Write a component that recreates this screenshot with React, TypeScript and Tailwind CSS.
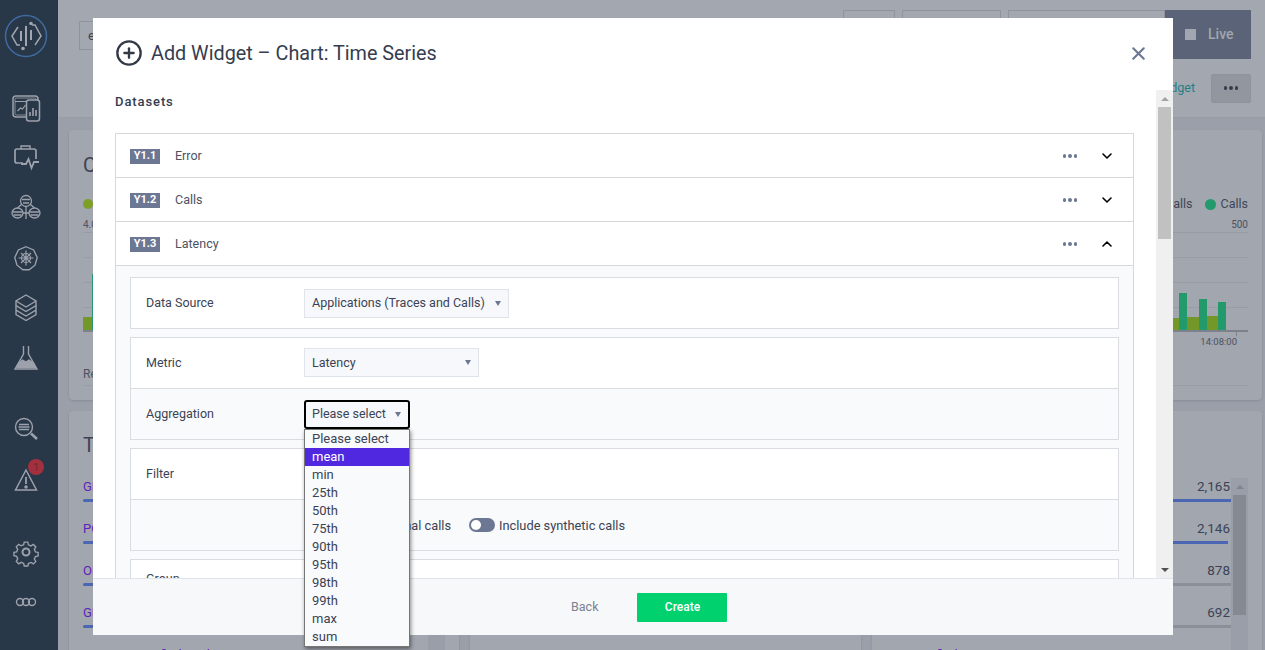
import type { ReactNode } from "react";
import { ChevronDown, ChevronUp, CirclePlus, X } from "lucide-react";

const font = { fontFamily: '"Roboto", "Liberation Sans", sans-serif' };

const options = ["Please select", "mean", "min", "25th", "50th", "75th", "90th", "95th", "98th", "99th", "max", "sum"];

const leftRows = [
  { label: "GET /api/snapshots", color: "bg-[#4b67b3]" },
  { label: "POST /api/events", color: "bg-[#4b67b3]" },
  { label: "OPTIONS /api/events", color: "bg-[#4b67b3]" },
  { label: "GET /api/calls", color: "bg-[#4b67b3]" },
  { label: "www.unspecified.application", color: "bg-[#4b67b3]" },
];

const rightRows = [
  { label: "GET /api", value: "2,165", bar: "w-full", color: "bg-[#4b67b3]" },
  { label: "POST /api", value: "2,146", bar: "w-[99%]", color: "bg-[#4b67b3]" },
  { label: "GET /calls", value: "878", bar: "w-full", color: "bg-[#8b8f9a]" },
  { label: "GET /events", value: "692", bar: "w-full", color: "bg-[#8b8f9a]" },
  { label: "/unspecified/", value: "", bar: "w-full", color: "bg-[#8b8f9a]" },
];

function LogoIcon() {
  return (
    <svg width="44" height="44" viewBox="0 0 44 44" fill="none">
      <circle cx="22" cy="22" r="20.5" stroke="#3f6b9f" strokeWidth="1.5" />
      <path d="M14 13 8 22l5 9h3M28 11h3l6 11-6 9" stroke="#a2a6b0" strokeWidth="1.5" />
      <path d="M17 17v10M22 12v20M27 16v10" stroke="#a2a6b0" strokeWidth="2" />
      <circle cx="27" cy="9.500" r="1.800" fill="#a2a6b0" />
      <circle cx="19" cy="34.500" r="1.800" fill="#a2a6b0" />
    </svg>
  );
}

function NavIcon({ name }: { name: string }) {
  const s = { stroke: "#9da1ac", strokeWidth: 1.2, fill: "none" };
  return (
    <svg width="30" height="30" viewBox="0 0 30 30">
      {name === "dash" && (
        <g {...s}>
          <rect x="2" y="3" width="25" height="21" rx="3" strokeWidth="1.500" />
          <rect x="4" y="5" width="21" height="17" rx="1.500" strokeWidth=".8" />
          <path d="M4 8.500h15M6.500 18l3-3 2 1 3-4" />
          <rect x="15.500" y="7" width="13" height="21" rx="2.500" fill="#283848" strokeWidth="1.500" />
          <path d="M19 23v-4M22 23v-8M25 23v-6" strokeWidth="1.600" />
        </g>
      )}
      {name === "case" && (
        <g {...s}>
          <path d="M10 6V3h9v3" strokeWidth="1.400" />
          <path d="M12 20H6a2 2 0 0 1-2-2V8a2 2 0 0 1 2-2h17a2 2 0 0 1 2 2v8" strokeWidth="1.700" />
          <path d="M10 21h5l2.500-5 3 9 2.500-6h5" strokeWidth="1.800" />
        </g>
      )}
      {name === "nodes" && (
        <g {...s} strokeWidth="1.300">
          <circle cx="15" cy="8" r="5.500" />
          <path d="M11 6.500h8M12 10h6" />
          <ellipse cx="6.500" cy="20" rx="5.500" ry="5" />
          <ellipse cx="23.500" cy="20" rx="5.500" ry="5" />
          <path d="M2 19h9M19 19h9M2.500 22h8M19.500 22h8M11 11 6.500 15M19 11l4.500 4M12 20h6M15 14v12" />
        </g>
      )}
      {name === "kube" && (
        <g {...s}>
          <path d="m15 2.500 8.500 3.500 4 8.500-2.500 8.500-6.500 5h-7L5 23l-2.500-8.500 4-8.500z" strokeWidth="1.500" transform="translate(1.500 1.500) scale(.9)" />
          <circle cx="15" cy="15" r="4.500" />
          <path d="M15 7.500v15M7.500 15h15M10 10l10 10M20 10 10 20" />
        </g>
      )}
      {name === "layers" && (
        <g {...s} strokeWidth="1.400">
          <path d="m15 2 10 6v4.500l-10 6-10-6V8z" />
          <path d="m5 8 10 6 10-6M5 12.500v4.500l10 6 10-6v-4.500M5 17v4.500l10 6 10-6V17" />
        </g>
      )}
      {name === "flask" && (
        <g {...s} strokeWidth="1.400">
          <path d="M12.500 3v8L4 26h22l-8.500-15V3" />
          <path d="m8 20 3.500-3 3.500 2 3-2 4.500 3 2 4.500H6z" fill="#9da1ac" />
        </g>
      )}
      {name === "search" && (
        <g {...s} strokeWidth="1.400">
          <circle cx="13" cy="13" r="8.500" />
          <path d="M8 10.500h10M7.500 13h11M8 15.500h10" strokeWidth="1.700" />
          <path d="m20 19.500 6 5.500" strokeWidth="2.600" />
        </g>
      )}
      {name === "warn" && (
        <g {...s} strokeWidth="1.500">
          <path d="M15 5 4.500 25h21z" />
          <path d="M15 12v7" strokeWidth="1.800" />
          <circle cx="15" cy="22" r="1" fill="#9da1ac" />
        </g>
      )}
      {name === "gear" && (
        <g {...s} strokeWidth="1.500">
          <path d="m13 4 4 0 .7 3 2.800 1.200 2.700-1.600 2.700 2.800-1.600 2.700 1.200 2.800 3 .6v3.800l-3 .7-1.200 2.800 1.600 2.700-2.700 2.700-2.700-1.600-2.800 1.200-.7 2.700h-4l-.6-2.800-2.800-1.200-2.700 1.600-2.700-2.700 1.600-2.700-1.200-2.800-3-.7v-3.800l3-.6 1.200-2.800-1.600-2.700 2.700-2.800 2.700 1.600 2.800-1.200z" transform="translate(1.500 1.500) scale(.9)" />
          <circle cx="15" cy="15" r="3.500" strokeWidth="2" />
        </g>
      )}
      {name === "more" && (
        <g {...s} strokeWidth="1.400">
          <circle cx="9" cy="15" r="3.500" />
          <circle cx="15" cy="15" r="3.500" />
          <circle cx="21" cy="15" r="3.500" />
        </g>
      )}
    </svg>
  );
}

function NavItem({ name, badge }: { name: string; badge?: boolean }) {
  return (
    <div className="relative flex h-[50px] items-center justify-center pr-[7px]">
      <NavIcon name={name} />
      {badge && (
        <span className="absolute left-[28px] top-[4px] flex h-4 w-4 items-center justify-center rounded-full bg-[#a3303d] text-[10px] text-[#78242f]">
          1
        </span>
      )}
    </div>
  );
}

function Sidebar() {
  return (
    <aside className="flex h-full w-[58px] shrink-0 flex-col bg-[#283848]">
      <div className="flex h-[83px] items-start justify-center pr-[7px] pt-[14px]">
        <LogoIcon />
      </div>
      <NavItem name="dash" />
      <NavItem name="case" />
      <NavItem name="nodes" />
      <NavItem name="kube" />
      <NavItem name="layers" />
      <NavItem name="flask" />
      <div className="mt-[21px]">
        <NavItem name="search" />
      </div>
      <div className="mt-[1px]">
        <NavItem name="warn" badge />
      </div>
      <div className="mt-[22px]">
        <NavItem name="gear" />
      </div>
      <NavItem name="more" />
    </aside>
  );
}

function Dots({ color = "bg-[#6c7793]", size = "h-[3.5px] w-[3.5px]" }: { color?: string; size?: string }) {
  return (
    <span className="flex items-center gap-[2px]">
      <span className={`${size} rounded-full ${color}`} />
      <span className={`${size} rounded-full ${color}`} />
      <span className={`${size} rounded-full ${color}`} />
    </span>
  );
}

function PageHeader() {
  return (
    <div className="h-[118px] shrink-0 border-b border-[#989ca6] bg-[#a3a7b0] shadow-sm">
      <div className="flex h-[59px] items-start pl-[21px] pr-[14px] pt-[10px]">
        <div className="mt-[11px] flex h-[29px] w-[120px] items-center border border-[#8f939d] pl-2 text-[13px] text-[#3e4656]">e</div>
        <div className="ml-auto flex h-[49px] items-start gap-[7px]">
          <div className="h-[30px] w-[52px] border border-[#8f939d]" />
          <div className="h-[30px] w-[99px] border border-[#8f939d]" />
          <div className="h-[30px] w-[157px] border border-[#8f939d]" />
          <div className="-ml-[7px] flex h-[49px] w-[86px] items-center gap-[12px] bg-[#5a6377] pl-[20px] text-[14px] font-medium text-[#a2a6b0]">
            <span className="h-[11px] w-[11px] bg-[#a2a6b0]" />
            Live
          </div>
        </div>
      </div>
      <div className="flex h-[58px] items-center justify-end pr-[14px]">
        <span className="mr-[16px] text-[12.5px] text-[#1f7f86]">Add Widget</span>
        <div className="flex h-[29px] w-[40px] items-center justify-center rounded-[2px] border border-[#8f939d] bg-[#92969f]">
          <Dots color="bg-[#353c4d]" />
        </div>
      </div>
    </div>
  );
}

function ChartCard() {
  return (
    <div className="flex h-[270px] flex-col rounded-[4px] bg-[#a2a6af] px-[14px] pt-[22px] shadow-sm">
      <div className="h-[30px] text-[20px] leading-[26px] text-[#3b4354]">Calls</div>
      <div className="mt-[14px] flex h-[16px] items-center justify-between text-[12.5px] text-[#3e4656]">
        <span className="h-[10px] w-[10px] rounded-full bg-[#7ba024]" />
        <span className="flex items-center gap-[5px]">
          Calls <span className="ml-[7px] h-[11px] w-[11px] rounded-full bg-[#239a6b]" /> Calls
        </span>
      </div>
      <div className="mt-[5px] flex h-[14px] justify-between text-[10px] text-[#4b5262]">
        <span>4.0</span>
        <span>500</span>
      </div>
      <div className="relative mt-[1px] h-[100px] border-b-2 border-[#7d818b]">
        <div className="h-[25px] border-t border-[#989ca6]" />
        <div className="h-[25px] border-t border-[#989ca6]" />
        <div className="h-[25px] border-t border-[#989ca6]" />
        <div className="h-[25px] border-t border-[#989ca6]" />
        <div className="absolute bottom-0 left-0 h-[13px] w-[10px] bg-[#74972a]" />
        <div className="absolute bottom-0 left-[9px] h-[56px] w-[2px] bg-[#239a6b]" />
        <div className="absolute bottom-0 right-[22px] flex h-[38px] items-end">
          <div className="h-[12px] w-[7px] bg-[#74972a]" />
          <div className="h-[37px] w-[8px] bg-[#239a6b]" />
          <div className="h-[13px] w-[12px] bg-[#74972a]" />
          <div className="h-[31px] w-[8px] bg-[#239a6b]" />
          <div className="h-[14px] w-[11px] bg-[#74972a]" />
          <div className="h-[28px] w-[8px] bg-[#239a6b]" />
        </div>
        <div className="absolute bottom-[-6px] right-[11px] h-[4px] w-px bg-[#7d818b]" />
      </div>
      <div className="mt-[3px] h-[14px] text-right text-[9.5px] leading-[14px] text-[#4b5262]">
        <span className="mr-[11px]">14:08:00</span>
      </div>
      <div className="mt-[18px] h-[19px] border-b border-[#989ca6] text-[12px] leading-[14px] text-[#4b5262]">Rec</div>
    </div>
  );
}

function BottomCards() {
  return (
    <div className="mt-[11px] grid grid-cols-3 gap-[11px]">
      <div className="h-[260px] rounded-[4px] bg-[#a2a6af] px-[14px] pt-[20px] shadow-sm">
        <div className="h-[28px] text-[20px] leading-[28px] text-[#3b4354]">Top</div>
        <div className="mt-[19px] flex">
          <div className="flex flex-1 flex-col gap-[18px]">
            {leftRows.map((row) => (
              <div key={row.label} className="h-[24px]">
                <div className="h-[21px] whitespace-pre text-[13px] leading-[18px] text-[#5a25b8]">{row.label}</div>
                <div className={`h-[3px] rounded-full ${row.color}`} />
              </div>
            ))}
          </div>
          <div className="w-[17px] shrink-0 bg-[#9a9ea8]" />
        </div>
      </div>
      <div className="h-[260px] rounded-[4px] bg-[#a2a6af] shadow-sm" />
      <div className="flex h-[260px] rounded-[4px] bg-[#a2a6af] pl-[14px] pr-[14px] pt-[67px] shadow-sm">
        <div className="flex flex-1 flex-col gap-[18px]">
          {rightRows.map((row) => (
            <div key={row.label} className="h-[24px]">
              <div className="flex h-[21px] justify-between pr-px text-[13.5px] leading-[17px] text-[#3b4354]">
                <span className="text-[13px] text-[#5a25b8]">{row.label}</span>
                <span>{row.value}</span>
              </div>
              <div className={`h-[3px] ${row.color} ${row.bar}`} />
            </div>
          ))}
        </div>
        <div className="w-[17px] shrink-0 bg-[#9a9ea8] px-[2px]">
          <div className="flex h-[17px] items-center justify-center">
            <span className="h-0 w-0 border-x-[4px] border-b-[4px] border-x-transparent border-b-[#80848e]" />
          </div>
          <div className="h-[120px] bg-[#858992]" />
        </div>
      </div>
    </div>
  );
}

function Select({ label, width, focus }: { label: string; width: string; focus?: boolean }) {
  return (
    <div
      className={`flex h-[29px] items-center justify-between bg-[#f7f8fb] pr-[7px] text-[12.5px] text-[#3b4354] ${width} ${
        focus ? "rounded-[3px] border-2 border-black pl-[6px]" : "border border-[#dfe3ea] pl-[7px]"
      }`}
    >
      <span className="pt-px">{label}</span>
      <span className="h-0 w-0 border-x-[3px] border-t-[5px] border-x-transparent border-t-[#6c7793]" />
    </div>
  );
}

function FormRow({ label, grey, last, children }: { label?: string; grey?: boolean; last?: boolean; children?: ReactNode }) {
  return (
    <div className={`flex items-center ${grey ? "bg-[#f9fafc]" : "bg-white"} ${last ? "h-[50px]" : "h-[51px] border-b border-[#d9dce1] pb-px"}`}>
      <div className={`w-[173px] shrink-0 pl-[15px] text-[12.5px] text-[#3b4354] ${last ? "pt-px" : "pt-[2px]"}`}>{label}</div>
      {children}
    </div>
  );
}

function Toggle() {
  return (
    <span className="flex h-[14px] w-[26px] items-center rounded-full bg-[#6c7793] pl-[2px]">
      <span className="h-[10px] w-[10px] rounded-full bg-white" />
    </span>
  );
}

function DatasetRow({ id, name, open }: { id: string; name: string; open?: boolean }) {
  return (
    <div className="flex h-[44px] items-center border-b border-[#d8d8d8] bg-white pl-[14px] pr-[18px] pt-[1px]">
      <span className="flex h-[15px] w-[30px] items-center justify-center bg-[#6c7793] text-[11px] font-bold text-white">{id}</span>
      <span className="ml-[15px] text-[12.5px] text-[#4b5262]">{name}</span>
      <span className="ml-auto mr-[22px]">
        <Dots />
      </span>
      {open ? <ChevronUp size={16} strokeWidth={2.4} color="#000" /> : <ChevronDown size={16} strokeWidth={2.4} color="#000" />}
    </div>
  );
}

function Modal() {
  return (
    <div className="absolute left-[93px] top-[18px] flex h-[617px] w-[1080px] flex-col bg-white">
      <div className="flex h-[72px] shrink-0 items-center pl-[24px] pr-[24px] pb-[2px]">
        <CirclePlus size={28} strokeWidth={2} color="#333a47" className="-ml-[2px]" />
        <h1 className="ml-[8px] mt-[2px] text-[19.8px] font-normal text-[#353d4f]">Add Widget – Chart: Time Series</h1>
        <X size={21} strokeWidth={2.4} color="#6c7793" className="ml-auto" />
      </div>

      <div className="flex min-h-0 flex-1">
        <div className="min-w-0 flex-1 overflow-hidden pl-[22px] pr-[22px]">
          <div className="h-[43px] pt-[2px] text-[13px] font-medium tracking-[0.9px] text-[#353d4f]">Datasets</div>
          <div className="border-x border-t border-[#d8d8d8]">
            <DatasetRow id="Y1.1" name="Error" />
            <DatasetRow id="Y1.2" name="Calls" />
            <DatasetRow id="Y1.3" name="Latency" open />
            <div className="flex flex-col gap-[8px] bg-[#f9fafc] px-[14px] pt-[11px]">
              <div className="border border-[#d9dce1]">
                <FormRow label="Data Source" last>
                  <Select label="Applications (Traces and Calls)" width="w-[205px]" />
                </FormRow>
              </div>
              <div className="border border-[#d9dce1]">
                <FormRow label="Metric">
                  <Select label="Latency" width="w-[175px]" />
                </FormRow>
                <FormRow label="Aggregation" grey last>
                  <Select label="Please select" width="w-[106px]" focus />
                </FormRow>
              </div>
              <div className="border border-[#d9dce1]">
                <FormRow label="Filter" />
                <FormRow grey last>
                  <div className="flex items-center text-[12.8px] text-[#3b4354]">
                    <Toggle />
                    <span className="ml-[4px] w-[117px] whitespace-nowrap pt-px text-right">Include internal calls</span>
                    <span className="ml-[18px]">
                      <Toggle />
                    </span>
                    <span className="ml-[4px] pt-px">Include synthetic calls</span>
                  </div>
                </FormRow>
              </div>
              <div className="flex h-[40px] items-center border border-[#d9dce1] bg-white pl-[15px] text-[12.5px] text-[#3b4354]">Group</div>
            </div>
          </div>
        </div>
        <div className="flex w-[17px] shrink-0 flex-col bg-[#f0f0f0]">
          <div className="flex h-[17px] items-center justify-center">
            <span className="h-0 w-0 border-x-[4px] border-b-[4px] border-x-transparent border-b-[#a3a3a3]" />
          </div>
          <div className="mx-[2px] h-[132px] bg-[#c1c1c1]" />
          <div className="mt-auto flex h-[17px] items-center justify-center">
            <span className="h-0 w-0 border-x-[4px] border-t-[4px] border-x-transparent border-t-[#505050]" />
          </div>
        </div>
      </div>

      <div className="flex h-[57px] shrink-0 items-center border-t border-[#e1e4ea] bg-[#f7f8fa] pl-[478px]">
        <span className="text-[12.5px] text-[#7b8190]">Back</span>
        <button className="ml-[39px] h-[29px] w-[90px] rounded-[1px] bg-[#00d16f] text-[12px] font-medium text-white">Create</button>
      </div>

      <ul className="absolute left-[211px] top-[411px] w-[106px] border border-[#767676] bg-[#f9fafc] text-[13px] leading-[18px] text-[#3b4354] shadow-[1px_2px_4px_rgba(0,0,0,0.45)]">
        {options.map((opt) => (
          <li key={opt} className={`h-[18px] pl-[7px] ${opt === "mean" ? "bg-[#5028e0] text-white" : ""}`}>
            {opt}
          </li>
        ))}
      </ul>
    </div>
  );
}

export default function App() {
  return (
    <div className="relative flex h-[650px] w-full overflow-hidden bg-[#a3a7b0]" style={font}>
      <Sidebar />
      <div className="flex min-w-0 flex-1 flex-col">
        <PageHeader />
        <div className="bg-[#9b9fa9] pl-[11px] pr-[3px] pt-[12px]">
          <ChartCard />
          <BottomCards />
        </div>
      </div>
      <Modal />
    </div>
  );
}
